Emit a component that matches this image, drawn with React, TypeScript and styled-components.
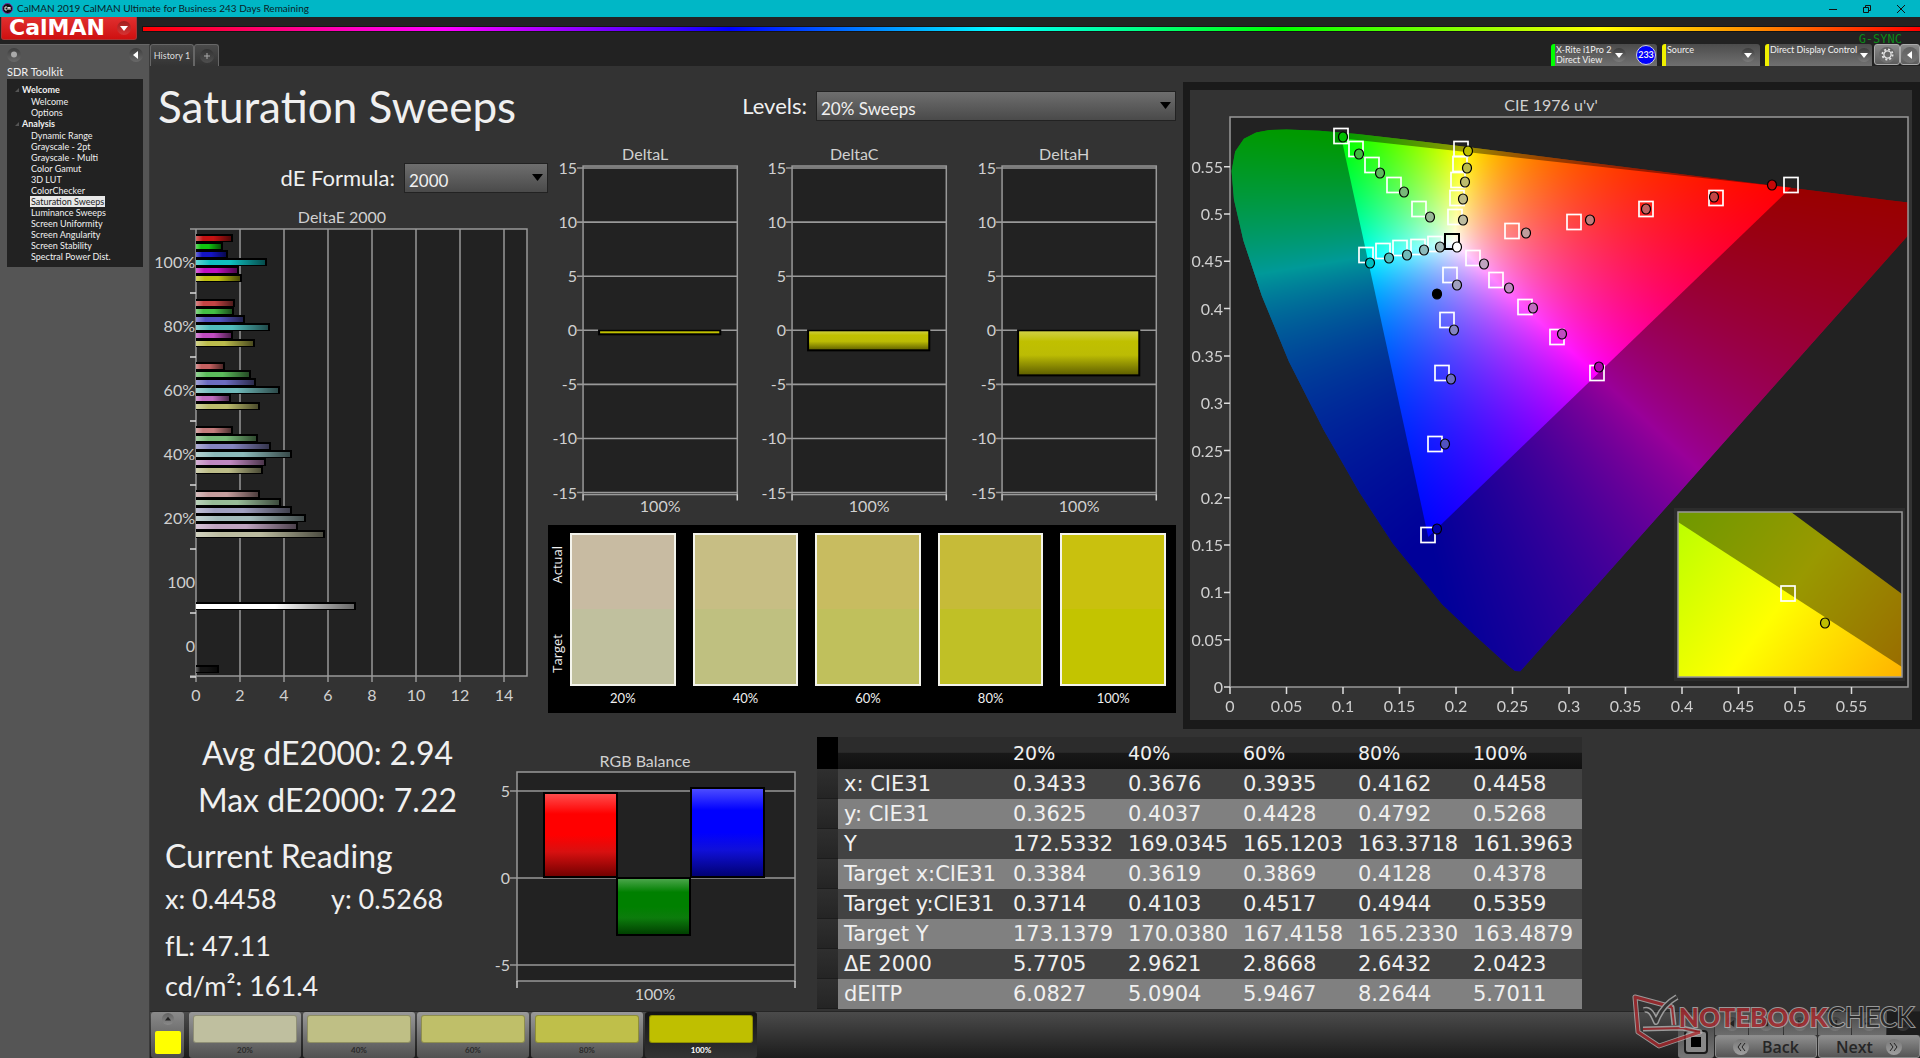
import React, { useEffect, useRef } from "react";
import styled, { createGlobalStyle } from "styled-components";

const UI = `Lato, "Open Sans", "Noto Sans", sans-serif`;

const GlobalStyle = createGlobalStyle`
  *, *::before, *::after { box-sizing: border-box; }
  body { margin: 0; background: #333; color: #f0f0f0; font-family: ${UI}; }
  h1, h2, p, ul, dl, dd { margin: 0; padding: 0; font-weight: 400; }
  ul { list-style: none; }
  button, select { font: inherit; color: inherit; border: 0; padding: 0; margin: 0; }
`;

/* ---------- window frame ---------- */

const Page = styled.div`
  position: relative;
  display: flex;
  flex-direction: column;
  min-height: 100vh;
  background: #222;
  overflow: hidden;
`;

const TitleBar = styled.header`
  display: flex;
  align-items: center;
  justify-content: space-between;
  height: 17px;
  padding: 0 13px 0 2px;
  background: #00b7c6;
  color: #0a2226;
  font-size: 10px;
  line-height: 17px;
`;

const AppName = styled.div`
  display: flex;
  align-items: center;
  gap: 4px;
`;

const WindowButtons = styled.div`
  display: flex;
  gap: 22px;
`;

const WindowButton = styled.button`
  display: flex;
  width: 12px;
  height: 12px;
  background: none;
`;

const Banner = styled.div`
  display: flex;
  height: 27px;
  gap: 6px;
`;

const LogoButton = styled.button`
  display: flex;
  align-items: center;
  justify-content: space-between;
  width: 136px;
  height: 23px;
  margin-left: 1px;
  padding: 0 5px 0 7px;
  border-radius: 0 0 3px 3px;
  border: 1px solid #a33;
  border-top: 0;
  background: linear-gradient(#e03030, #cf1010);
  color: #fff;
  font: bold 22px/22px "DejaVu Sans", sans-serif;
`;

const Rainbow = styled.div`
  flex: 1;
  height: 4px;
  margin-top: 10px;
  outline: 1px solid rgba(0, 0, 0, 0.4);
  background: linear-gradient(
    90deg,
    #f00 0%, #ff00c8 12%, #f0f 17%, #4000ff 30%, #00f 33%, #00c8ff 45%,
    #0ff 48%, #0f8 56%, #0f0 64%, #a0ff00 76%, #ff0 82%, #f80 91%, #f00 100%
  );
`;

const Columns = styled.div`
  display: flex;
  flex: 1;
`;

/* ---------- sidebar ---------- */

const Sidebar = styled.aside`
  display: flex;
  flex-direction: column;
  width: 150px;
  padding: 3px 6px 0 7px;
  background: #555;
  border-right: 1px solid #3a3a3a;
  border-top: 1px solid #666;
`;

const SideTools = styled.div`
  display: flex;
  justify-content: space-between;
  height: 17px;
`;

const RoundButton = styled.button<{ $size?: number }>`
  display: flex;
  flex: none;
  align-items: center;
  justify-content: center;
  width: ${(p) => p.$size ?? 14}px;
  height: ${(p) => p.$size ?? 14}px;
  border-radius: 50%;
  background: linear-gradient(rgba(0, 0, 0, 0.28), rgba(255, 255, 255, 0.12));
`;

const SideTitle = styled.h2`
  height: 14px;
  font-size: 11px;
  line-height: 14px;
`;

const Tree = styled.ul`
  height: 188px;
  padding: 5px 0 0 15px;
  background: #222;
  font-size: 9px;
  line-height: 11px;
`;

const TreeGroup = styled.li`
  position: relative;
  font-weight: 700;

  &::before {
    content: "";
    position: absolute;
    left: -7px;
    top: 4px;
    border: 2px solid;
    border-color: transparent #555 #555 transparent;
  }
`;

const TreeLeaves = styled.ul`
  padding: 1px 0 0 8px;
  font-weight: 400;
`;

const TreeLink = styled.a<{ $active?: boolean }>`
  display: block;
  width: max-content;
  padding: 0 1px;
  color: ${(p) => (p.$active ? "#222" : "#f0f0f0")};
  background: ${(p) => (p.$active ? "#e8e8e8" : "none")};
  text-decoration: none;
`;

/* ---------- tabs and devices ---------- */

const Work = styled.div`
  display: flex;
  flex: 1;
  flex-direction: column;
  min-width: 0;
`;

const TabStrip = styled.div`
  display: flex;
  justify-content: space-between;
  height: 22px;
`;

const Tabs = styled.div`
  display: flex;
`;

const Tab = styled.button<{ $width: number }>`
  display: flex;
  align-items: center;
  justify-content: center;
  width: ${(p) => p.$width}px;
  border: 1px solid #666;
  border-bottom: 0;
  border-radius: 3px 3px 0 0;
  background: linear-gradient(#4a4a4a, #333);
  color: #ddd;
  font-size: 9px;
  white-space: nowrap;
`;

const Devices = styled.div`
  display: flex;
  gap: 5px;
`;

const Device = styled.div<{ $width: number; $accent: string }>`
  display: flex;
  width: ${(p) => p.$width}px;
  height: 22px;
  border-left: 4px solid ${(p) => p.$accent};
  border-radius: 3px 3px 0 0;
  background: linear-gradient(#4c4c4c, #707070);
  font-size: 9px;
  line-height: 10px;
`;

const DeviceName = styled.button`
  display: flex;
  flex: 1;
  justify-content: space-between;
  align-items: center;
  padding: 0 5px 0 1px;
  background: none;
  text-align: left;
  white-space: nowrap;
`;

const DeviceLabel = styled.span`
  align-self: flex-start;
  padding-top: 1px;
`;

const Counter = styled.span`
  align-self: center;
  width: 20px;
  height: 20px;
  margin: 0 1px 0 5px;
  border: 1px solid #ccd;
  border-radius: 50%;
  background: #00f;
  font-weight: 700;
  font-size: 9px;
  line-height: 18px;
  text-align: center;
`;

const SquareButtons = styled.div`
  display: flex;
  margin-left: -3px;
`;

const SquareButton = styled.button<{ $width: number }>`
  display: flex;
  align-items: center;
  justify-content: center;
  width: ${(p) => p.$width}px;
  height: 21px;
  border: 1px solid #aaa;
  border-radius: 3px;
  background: linear-gradient(#8a8a8a, #5c5c5c);
`;

const SyncMark = styled.div`
  position: absolute;
  top: 32px;
  right: 18px;
  height: 11px;
  overflow: hidden;
  color: #0a8a18;
  font: 12px/14px "DejaVu Sans Mono", monospace;
`;

/* ---------- content ---------- */

const Content = styled.main`
  flex: 1;
  background: #333;
`;

const UpperRow = styled.section`
  display: grid;
  grid-template-columns: 1033fr 737fr;
`;

const Sweeps = styled.div`
  padding-right: 7px;
`;

const Heading = styled.div`
  display: flex;
  align-items: center;
  justify-content: space-between;
  height: 76px;
  padding: 4px 0 0 8px;
`;

const PageTitle = styled.h1`
  font-size: 44px;
  line-height: 54px;
`;

const Field = styled.div`
  display: flex;
  align-items: center;
  justify-content: flex-end;
  gap: 9px;
`;

const FieldLabel = styled.label`
  font-size: 22px;
  line-height: 30px;
`;

const SelectBox = styled.div<{ $width: number }>`
  position: relative;
  width: ${(p) => p.$width}px;

  svg {
    position: absolute;
    right: 5px;
    top: 11px;
    pointer-events: none;
  }
`;

const Select = styled.select`
  appearance: none;
  width: 100%;
  height: 30px;
  padding: 4px 4px 0;
  border: 1px solid #222;
  background: linear-gradient(#6e6e6e, #4a4a4a);
  font-size: 17px;
`;

const ChartColumns = styled.div`
  display: grid;
  grid-template-columns: 398fr 628fr;
`;

const FormulaColumn = styled.div`
  padding-top: 21px;
`;

const Trio = styled.div`
  display: grid;
  grid-template-columns: repeat(3, 1fr);
`;

const Chart = styled.svg`
  display: block;
  width: 100%;
  height: auto;
  font-family: ${UI};
  font-size: 16px;
  fill: #d0d0d0;
`;

const SwatchPanel = styled.div`
  display: grid;
  grid-template-columns: 18px 1fr;
  gap: 4px;
  height: 188px;
  padding: 8px 10px 0 0;
  background: #000;
`;

const Upright = styled.div`
  display: flex;
  flex-direction: column;
  align-items: center;
  justify-content: space-between;
  height: 153px;
  padding: 13px 0;
`;

const VerticalText = styled.span`
  writing-mode: vertical-rl;
  transform: rotate(180deg);
  font: 13px/16px "Open Sans", "Noto Sans", sans-serif;
`;

const SwatchList = styled.div`
  display: grid;
  grid-template-columns: repeat(5, 1fr);
  gap: 17px;
`;

const Swatch = styled.figure`
  margin: 0;
  text-align: center;
  font-size: 13px;
  line-height: 24px;
`;

const SwatchFill = styled.div<{ $actual: string; $target: string }>`
  height: 153px;
  border: 2px solid #f4f4ec;
  background: linear-gradient(${(p) => p.$actual} 50%, ${(p) => p.$target} 50%);
`;

/* ---------- chromaticity diagram ---------- */

const CiePanel = styled.div`
  margin-top: 16px;
  border: solid #1a1a1a;
  border-width: 8px 8px 9px 7px;
`;

const CieTitle = styled.h2`
  height: 26px;
  padding-top: 3px;
  color: #d0d0d0;
  font-size: 16px;
  line-height: 24px;
  text-align: center;
`;

const Stage = styled.div`
  display: grid;

  > * {
    grid-area: 1 / 1;
    width: 100%;
    height: auto;
  }
`;

/* ---------- lower row ---------- */

const LowerRow = styled.section`
  display: grid;
  grid-template-columns: 340fr 327fr 765fr 338fr;
`;

const Metrics = styled.div`
  padding-left: 15px;
`;

const Summary = styled.p`
  font-size: 32px;
  line-height: 47px;
  text-align: center;
`;

const ReadingTitle = styled.h2`
  margin-top: 9px;
  font-size: 32px;
  line-height: 47px;
`;

const Reading = styled.div<{ $spaced?: boolean }>`
  display: grid;
  grid-template-columns: 166px auto;
  margin-top: ${(p) => (p.$spaced ? 7 : 0)}px;
  font-size: 27px;
  line-height: 40px;
  white-space: nowrap;
`;

const BalanceBox = styled.div`
  padding-top: 16px;
`;

const TableBox = styled.div`
  padding-top: 8px;
`;

const DataTable = styled.table`
  width: 100%;
  border-collapse: collapse;
  table-layout: fixed;
  font: 21px/30px "DejaVu Sans", "Noto Sans", sans-serif;
  text-align: left;
  white-space: nowrap;

  col:nth-child(1) { width: 21px; }
  col:nth-child(2) { width: 169px; }
  th, td { padding: 0 0 0 6px; font-weight: 400; }
`;

const HeadRow = styled.tr`
  height: 32px;
  font-size: 19px;
  background: linear-gradient(#2c2c2c 48%, #181818 50%, #101010);

  td:first-child { background: #000; }
`;

const BodyRow = styled.tr<{ $light: boolean }>`
  height: 30px;
  background: ${(p) => (p.$light ? "#808080" : "#424242")};

  td:first-child {
    background: linear-gradient(#2f2f2f, #242424);
    box-shadow: inset 0 -1px #1c1c1c;
  }
`;

/* ---------- pattern bar ---------- */

const BottomBar = styled.footer`
  display: flex;
  align-items: flex-end;
  justify-content: space-between;
  height: 47px;
  border-top: 1px solid #262626;
  background: linear-gradient(#4b4b4b, #1c1c1c);
`;

const Patterns = styled.div`
  display: flex;
  gap: 2px;
  padding-left: 1px;
`;

const CurrentPattern = styled.button`
  display: flex;
  flex-direction: column;
  align-items: center;
  justify-content: space-between;
  width: 33px;
  height: 46px;
  margin-right: 3px;
  padding: 1px 0 4px;
  border-radius: 3px;
  background: linear-gradient(#8a8a8a, #4c4c4c);
`;

const CurrentChip = styled.span`
  width: 26px;
  height: 23px;
  border-radius: 2px;
  background: #ff0;
`;

const Pattern = styled.button<{ $active?: boolean }>`
  width: 112px;
  height: 46px;
  padding: 3px 4px 0;
  border-radius: 3px;
  background: ${(p) =>
    p.$active ? "linear-gradient(#141414, #333)" : "linear-gradient(#999, #515151)"};
  color: ${(p) => (p.$active ? "#fff" : "#2a2a2a")};
  font-size: 8px;
  font-weight: 700;
  line-height: 15px;
`;

const PatternChip = styled.span<{ $color: string }>`
  display: block;
  height: 28px;
  border: 1px solid rgba(0, 0, 0, 0.25);
  border-radius: 3px;
  background: ${(p) => p.$color};
`;

const Navigation = styled.div`
  display: grid;
  grid-template-columns: 36px 102px 102px;
  grid-template-rows: 23px 23px;
  column-gap: 1px;
`;

const StopButton = styled.button`
  display: flex;
  grid-row: 1 / 3;
  align-items: flex-end;
  justify-content: center;
  padding-bottom: 4px;
  border-radius: 3px;
  background: linear-gradient(#3c3c3c, #777);
`;

const Transport = styled.div`
  display: grid;
  grid-column: 2 / 4;
  grid-template-columns: repeat(6, 1fr);
  gap: 1px;
`;

const TransportButton = styled.button`
  display: flex;
  align-items: center;
  justify-content: center;
  background: linear-gradient(#4a4a4a, #6c6c6c);

  &:last-child { background: #1d1d1d; }
`;

const NavDisc = styled.span`
  display: flex;
  align-items: center;
  justify-content: center;
  width: 16px;
  height: 16px;
  border-radius: 50%;
  background: linear-gradient(#777, #a0a0a0);
`;

const NavButton = styled.button`
  display: flex;
  align-items: center;
  justify-content: center;
  gap: 13px;
  border: 1px solid #8c8c8c;
  border-radius: 3px;
  background: linear-gradient(#8e8e8e, #555);
  color: #262626;
  font: 600 16px/20px "Open Sans", sans-serif;
`;

const Watermark = styled.div`
  position: absolute;
  right: 6px;
  bottom: 8px;
  display: flex;
  align-items: flex-start;
  opacity: 0.75;
  pointer-events: none;
`;

const WatermarkText = styled.span`
  padding-top: 9px;
  margin-left: -25px;
  color: #b2282d;
  font: 900 26px/28px Lato, sans-serif;
  paint-order: stroke fill;
  -webkit-text-stroke: 2px #bbb;

  b { color: #222; font-weight: 400; }
`;

/* ---------- data ---------- */

const ANALYSIS = [
  "Dynamic Range", "Grayscale - 2pt", "Grayscale - Multi", "Color Gamut", "3D LUT", "ColorChecker",
  "Saturation Sweeps", "Luminance Sweeps", "Screen Uniformity", "Screen Angularity", "Screen Stability",
  "Spectral Power Dist.",
];

const LEVELS = ["20%", "40%", "60%", "80%", "100%"];

const SWATCHES = [
  ["#c8bba2", "#c0c09e"], ["#c7be84", "#bfc080"], ["#c8bc60", "#c0c05c"],
  ["#c6bb38", "#c0c026"], ["#c9c10e", "#c3c400"],
];

const PATTERN_COLORS = ["#bfbf9f", "#bfbf85", "#bfbf69", "#bfbf4a", "#bfbf00"];

const ROWS: [string, string[]][] = [
  ["x: CIE31", ["0.3433", "0.3676", "0.3935", "0.4162", "0.4458"]],
  ["y: CIE31", ["0.3625", "0.4037", "0.4428", "0.4792", "0.5268"]],
  ["Y", ["172.5332", "169.0345", "165.1203", "163.3718", "161.3963"]],
  ["Target x:CIE31", ["0.3384", "0.3619", "0.3869", "0.4128", "0.4378"]],
  ["Target y:CIE31", ["0.3714", "0.4103", "0.4517", "0.4944", "0.5359"]],
  ["Target Y", ["173.1379", "170.0380", "167.4158", "165.2330", "163.4879"]],
  ["ΔE 2000", ["5.7705", "2.9621", "2.8668", "2.6432", "2.0423"]],
  ["dEITP", ["6.0827", "5.0904", "5.9467", "8.2644", "5.7011"]],
];

type Bar = { y: number; end: number; color: string };

const SWEEP_GROUPS: [number, number[], string[]][] = [
  [38, [82, 72, 77, 116, 88, 91], ["#c41212", "#0fc40f", "#1414c4", "#0fbfbf", "#c010c0", "#bfbf10"]],
  [103, [84, 83, 94, 119, 82, 104], ["#c44444", "#44c044", "#5252c0", "#50bcbc", "#c04cc0", "#bcbc4c"]],
  [166, [74, 100, 105, 129, 80, 109], ["#c46060", "#5cbc5c", "#6c6cc0", "#70baba", "#c06cc0", "#bcbc6c"]],
  [230, [82, 107, 120, 141, 115, 112], ["#c47c7c", "#78ba78", "#8484c0", "#8cbaba", "#c088c0", "#bcbc88"]],
  [294, [109, 130, 141, 155, 147, 174], ["#c49c9c", "#98bc98", "#a0a0c0", "#a4bcbc", "#c0a4c0", "#bcbca0"]],
];

const SWEEP_BARS: Bar[] = [
  ...SWEEP_GROUPS.flatMap(([top, ends, colors]) =>
    ends.map((end, i) => ({ y: top + i * 8, end, color: colors[i] })),
  ),
  { y: 406, end: 205, color: "#ffffff" },
  { y: 469, end: 68, color: "#141414" },
];

/* ---------- glyphs ---------- */

const Caret = ({ dir = "down", fill = "#fff", size = 8 }: { dir?: "down" | "left" | "up"; fill?: string; size?: number }) => (
  <svg width={size} height={size} viewBox="0 0 8 8" aria-hidden>
    <path d={{ down: "M0 2h8L4 7z", left: "M6 0v8L1 4z", up: "M0 6h8L4 1z" }[dir]} fill={fill} />
  </svg>
);

const SelectCaret = () => (
  <svg width="11" height="8" viewBox="0 0 11 8" aria-hidden>
    <path d="M0 0h11L5.5 7z" fill="#000" />
  </svg>
);

const Gear = () => (
  <svg width="13" height="13" viewBox="0 0 13 13" fill="none" stroke="#e4e4e4" aria-hidden>
    <circle cx="6.5" cy="6.5" r="3.6" strokeWidth="1.3" />
    <circle cx="6.5" cy="6.5" r="5.1" strokeWidth="1.8" strokeDasharray="2 2" />
  </svg>
);

/* ---------- charts ---------- */

function DeltaEChart() {
  return (
    <Chart viewBox="0 0 398 519">
      <defs>
        <linearGradient id="barShade">
          <stop offset="0" stopColor="#fff" stopOpacity="0.35" />
          <stop offset="0.2" stopColor="#fff" stopOpacity="0" />
          <stop offset="0.5" stopColor="#000" stopOpacity="0" />
          <stop offset="1" stopColor="#000" stopOpacity="0.6" />
        </linearGradient>
      </defs>
      <g transform="translate(0 7)">
        <text x="192" y="23" textAnchor="middle">DeltaE 2000</text>
        <rect x="46" y="29" width="331" height="447" fill="#222" />
        {[0, 2, 4, 6, 8, 10, 12, 14].map((v) => (
          <g key={v}>
            <path d={`M${46 + v * 22} 29V482`} stroke="#999" strokeWidth="1.5" />
            <text x={46 + v * 22} y="501" textAnchor="middle">{v}</text>
          </g>
        ))}
        <path d="M40 29H377V476H40" fill="none" stroke="#999" strokeWidth="1.5" />
        {["100%", "80%", "60%", "40%", "20%", "100", "0"].map((t, i) => (
          <g key={i}>
            <path d={`M40 ${93 + i * 64}h6`} stroke="#ddd" strokeWidth="1.5" />
            <text x="45" y={68 + i * 64} textAnchor="end">{t}</text>
          </g>
        ))}
        {SWEEP_BARS.map((b) => (
          <g key={b.y}>
            <rect x="46" y={b.y - 4} width={b.end - 45} height="8" fill="#000" />
            <rect x="46" y={b.y - 2} width={b.end - 47} height="5" fill={b.color} />
            <rect x="46" y={b.y - 2} width={b.end - 47} height="5" fill="url(#barShade)" />
          </g>
        ))}
      </g>
    </Chart>
  );
}

function DeltaChart({ title, depth }: { title: string; depth: number }) {
  return (
    <Chart viewBox="0 0 209 382">
      <defs>
        <linearGradient id="yellowBar" x2="0" y2="1">
          <stop offset="0" stopColor="#d2d24a" />
          <stop offset="0.25" stopColor="#c0c000" />
          <stop offset="0.55" stopColor="#bcbc04" />
          <stop offset="1" stopColor="#5c5c00" />
        </linearGradient>
      </defs>
      <text x="97" y="18" textAnchor="middle">{title}</text>
      <rect x="35" y="24" width="154" height="328" fill="#222" stroke="#999" strokeWidth="1.5" />
      {[15, 10, 5, 0, -5, -10, -15].map((v, i) => (
        <g key={v}>
          <path d={`M29 ${26 + i * 54}H189`} stroke="#999" strokeWidth="1.5" />
          <text x="29" y={32 + i * 54} textAnchor="end">{v}</text>
        </g>
      ))}
      <path d="M35 352v6M189 352v6" stroke="#ccc" strokeWidth="1.5" />
      <rect x="51" y="188" width="121" height={depth} fill={depth > 8 ? "url(#yellowBar)" : "#c0c000"} stroke="#000" strokeWidth="2" />
      <text x="112" y="369" textAnchor="middle">100%</text>
    </Chart>
  );
}

function BalanceChart() {
  const bars = [
    { x: 54, y: 48, h: 84, from: "#ff5050", mid: "#ff0000", low: "#d81010", end: "#700000" },
    { x: 127, y: 133, h: 57, from: "#50a850", mid: "#008000", low: "#0c7c0c", end: "#003c00" },
    { x: 201, y: 43, h: 89, from: "#5050ff", mid: "#0000ff", low: "#1010d8", end: "#000070" },
  ];
  return (
    <Chart viewBox="0 0 327 265">
      <defs>
        {bars.map((b, i) => (
          <linearGradient id={`rgb${i}`} key={i} x2="0" y2="1">
            <stop offset="0" stopColor={b.from} />
            <stop offset="0.25" stopColor={b.mid} />
            <stop offset="0.5" stopColor={b.mid} />
            <stop offset="0.7" stopColor={b.low} />
            <stop offset="1" stopColor={b.end} />
          </linearGradient>
        ))}
      </defs>
      <text x="155" y="22" textAnchor="middle">RGB Balance</text>
      <rect x="27" y="27" width="278" height="209" fill="#222" stroke="#999" strokeWidth="1.5" />
      {[5, 0, -5].map((v, i) => (
        <g key={v}>
          <path d={`M20 ${46 + i * 87}H305`} stroke="#999" strokeWidth="1.5" />
          <text x="20" y={52 + i * 87} textAnchor="end">{v}</text>
        </g>
      ))}
      <path d="M27 236v7M305 236v7" stroke="#ccc" strokeWidth="1.5" />
      {bars.map((b, i) => (
        <rect key={i} x={b.x} y={b.y} width="73" height={b.h} fill={`url(#rgb${i})`} stroke="#000" strokeWidth="2" />
      ))}
      <text x="165" y="255" textAnchor="middle">100%</text>
    </Chart>
  );
}

/* Spectral locus in u'v', 380 nm to 700 nm. */
const LOCUS = [
  [0.2569, 0.0165], [0.2522, 0.0169], [0.2461, 0.0226], [0.2347, 0.035], [0.2161, 0.0549], [0.1877, 0.0871],
  [0.1441, 0.151], [0.1147, 0.2044], [0.0828, 0.2708], [0.0521, 0.3427], [0.0282, 0.4117], [0.0119, 0.4698],
  [0.0035, 0.5131], [0.0014, 0.5432], [0.0046, 0.5638], [0.0123, 0.577], [0.0231, 0.5837], [0.035, 0.5862],
  [0.0501, 0.5868], [0.0792, 0.5856], [0.1127, 0.5821], [0.1531, 0.5766], [0.2026, 0.5694], [0.2623, 0.5604],
  [0.3315, 0.5501], [0.4035, 0.5393], [0.4692, 0.5296], [0.5203, 0.5219], [0.583, 0.5125], [0.6234, 0.5065],
];
const P3 = [[0.0986, 0.5777], [0.4964, 0.5255], [0.1754, 0.1579]];

const PLOT = { x: 40, y: 1, w: 678, h: 570 };
const toX = (u: number) => PLOT.x + u * 1130;
const toY = (v: number) => PLOT.y + PLOT.h - v * 950;

/* Brightest displayable linear P3 colour with the chromaticity u'v'. */
function chromaColor(u: number, v: number): number[] {
  const d = 6 * u - 16 * v + 12;
  const x = (9 * u) / d;
  const y = Math.max((4 * v) / d, 0.0001);
  const X = x / y;
  const Z = (1 - x - y) / y;
  const lin = [
    2.4935 * X - 0.9314 - 0.4027 * Z,
    -0.8295 * X + 1.7627 + 0.0236 * Z,
    0.0358 * X - 0.0762 + 0.9569 * Z,
  ].map((c) => Math.max(c, 0));
  const top = Math.max(...lin);
  return lin.map((c) => (255 * c) / top);
}

function GamutCanvas() {
  const ref = useRef<HTMLCanvasElement>(null);
  useEffect(() => {
    const ctx = ref.current!.getContext("2d")!;
    const src = document.createElement("canvas");
    src.width = 722;
    src.height = 604;
    const sctx = src.getContext("2d")!;
    const img = sctx.createImageData(722, 604);
    for (let py = 0; py < 604; py++) {
      for (let px = 0; px < 722; px++) {
        const rgb = chromaColor((px - PLOT.x) / 1130, (PLOT.y + PLOT.h - py) / 950);
        const o = (py * 722 + px) * 4;
        img.data[o] = rgb[0];
        img.data[o + 1] = rgb[1];
        img.data[o + 2] = rgb[2];
        img.data[o + 3] = 255;
      }
    }
    sctx.putImageData(img, 0, 0);
    const trace = (points: number[][]) => {
      ctx.beginPath();
      points.forEach(([u, v]) => ctx.lineTo(toX(u), toY(v)));
      ctx.closePath();
    };
    ctx.fillStyle = "#222";
    ctx.fillRect(PLOT.x, PLOT.y, PLOT.w, PLOT.h);
    ctx.beginPath();
    ctx.rect(PLOT.x, PLOT.y, PLOT.w, PLOT.h);
    ctx.clip();
    ctx.save();
    trace(LOCUS);
    ctx.clip();
    ctx.drawImage(src, 0, 0);
    ctx.fillStyle = "rgba(0,0,0,0.4)";
    ctx.fillRect(0, 0, 722, 604);
    ctx.restore();
    ctx.save();
    trace(P3);
    ctx.clip();
    ctx.drawImage(src, 0, 0);
    ctx.restore();
  }, []);
  return <canvas ref={ref} width={722} height={604} />;
}

const TARGETS = [
  [151, 20], [166, 33], [182, 49], [204, 69], [229, 93],
  [271, 33], [270, 48], [268, 64], [267, 82], [265, 101],
  [176, 139], [193, 135], [210, 132], [228, 131], [245, 128],
  [283, 142], [306, 164], [335, 191], [367, 221], [407, 257],
  [260, 159], [257, 204], [252, 257], [245, 328], [238, 419],
  [322, 115], [384, 106], [456, 93], [526, 82], [601, 69],
];

const READINGS: [number, number, string][] = [
  [153, 21, "#00c000"], [169, 38, "#40b840"], [190, 57, "#5cb85c"], [214, 76, "#78b878"], [240, 101, "#98b898"],
  [278, 35, "#bfbf00"], [277, 52, "#bcbc48"], [275, 66, "#bcbc6c"], [273, 83, "#bcbc88"], [273, 104, "#bcbca0"],
  [180, 147, "#00bfbf"], [199, 142, "#50bcbc"], [217, 139, "#70baba"], [234, 134, "#8cbaba"], [250, 131, "#a4bcbc"],
  [267, 131, "#ffffff"], [247, 178, "#000000"],
  [294, 148, "#c0a4c0"], [319, 172, "#c088c0"], [343, 192, "#c06cc0"], [372, 218, "#c04cc0"], [409, 251, "#b000b0"],
  [267, 169, "#a0a0c0"], [264, 214, "#8484c0"], [261, 263, "#6c6cc0"], [255, 328, "#5252c0"], [247, 413, "#0000a8"],
  [336, 117, "#c09c9c"], [400, 104, "#c07c7c"], [456, 93, "#c06060"], [524, 81, "#c44444"], [582, 69, "#c40808"],
];

function CieChart() {
  const steps = Array.from({ length: 12 }, (_, i) => i);
  const name = (i: number) => String(Number((i * 0.05).toFixed(2)));
  return (
    <Chart viewBox="0 0 722 604">
      <defs>
        <linearGradient id="insetHue" gradientUnits="userSpaceOnUse" x1="0" y1="0" x2="220" y2="165">
          <stop offset="0" stopColor="#b8ff00" />
          <stop offset="0.5" stopColor="#ffff00" />
          <stop offset="1" stopColor="#ffb400" />
        </linearGradient>
      </defs>
      <rect x="40" y="1" width="678" height="570" fill="none" stroke="#999" strokeWidth="1.5" />
      {steps.map((i) => (
        <g key={i}>
          <path d={`M34 ${571 - i * 47.3}h6M${40 + i * 56.5} 571v7`} stroke="#ddd" strokeWidth="1.5" />
          <text x="33" y={577 - i * 47.3} textAnchor="end">{name(i)}</text>
          <text x={40 + i * 56.5} y="596" textAnchor="middle">{name(i)}</text>
        </g>
      ))}
      {TARGETS.map(([x, y]) => (
        <rect key={`${x}-${y}`} x={x - 7} y={y - 7.5} width="14" height="15" fill="none" stroke="#fff" strokeWidth="1.7" />
      ))}
      <rect x="255" y="118" width="14" height="15" fill="none" stroke="#000" strokeWidth="2" />
      {READINGS.map(([x, y, fill]) => (
        <ellipse key={`${x}-${y}`} cx={x} cy={y} rx="4.5" ry="5" fill={fill} stroke="#000" strokeWidth="1.2" />
      ))}
      <rect x="484" y="392" width="231" height="173" fill="#2c2c2c" />
      <g transform="translate(488 396)">
        <rect width="224" height="165" fill="url(#insetHue)" />
        <path d="M0 10V0H224V155z" fill="#000" fillOpacity="0.4" />
        <path d="M113 0H224V82z" fill="#222" />
        <rect width="224" height="165" fill="none" stroke="#999" strokeWidth="1.5" />
        <rect x="103" y="74" width="14" height="15" fill="none" stroke="#fff" strokeWidth="1.7" />
        <ellipse cx="147" cy="111" rx="4.5" ry="5" fill="#bfbf00" stroke="#000" strokeWidth="1.2" />
      </g>
    </Chart>
  );
}

/* ---------- page ---------- */

const TRANSPORT = [
  { label: "Rewind", d: "M8 1v8L2 5z" },
  { label: "Stop", d: "M1 1h7v7H1z" },
  { label: "Play", d: "M2 1v8l6-4z" },
  { label: "Step", d: "M1 1v8h2V1zM6 1v8h2V1z" },
  { label: "Loop", d: "M1 4h7v2H1z" },
  { label: "Refresh", d: "M1 1h7v2H3v4h5v2H1z" },
];

export default function App() {
  return (
    <Page>
      <GlobalStyle />
      <TitleBar>
        <AppName>
          <svg width="11" height="11" viewBox="0 0 11 11" aria-hidden>
            <circle cx="5.5" cy="5.5" r="5" fill="#111" stroke="#7a2fa0" />
            <path d="M5 4H3v3h2M6 7V4l1 1.500L8 4v3" stroke="#fff" fill="none" strokeWidth="0.9" />
          </svg>
          CalMAN 2019 CalMAN Ultimate for Business 243 Days Remaining
        </AppName>
        <WindowButtons>
          <WindowButton aria-label="Minimize">
            <svg width="12" height="12" viewBox="0 0 12 12"><path d="M2 6.500h8" stroke="#111" /></svg>
          </WindowButton>
          <WindowButton aria-label="Restore">
            <svg width="12" height="12" viewBox="0 0 12 12" fill="none" stroke="#111">
              <path d="M2.500 4.500h5v5h-5zM4.500 4.500v-2h5v5h-2" />
            </svg>
          </WindowButton>
          <WindowButton aria-label="Close">
            <svg width="12" height="12" viewBox="0 0 12 12"><path d="M2 2l8 8M10 2l-8 8" stroke="#111" /></svg>
          </WindowButton>
        </WindowButtons>
      </TitleBar>

      <Banner>
        <LogoButton>
          CalMAN
          <RoundButton as="span"><Caret /></RoundButton>
        </LogoButton>
        <Rainbow />
      </Banner>
      <SyncMark>G-SYNC</SyncMark>

      <Columns>
        <Sidebar>
          <SideTools>
            <RoundButton aria-label="Record">
              <svg width="8" height="8" viewBox="0 0 8 8"><circle cx="4" cy="3.500" r="3" fill="#aaa" /></svg>
            </RoundButton>
            <RoundButton aria-label="Collapse"><Caret dir="left" /></RoundButton>
          </SideTools>
          <SideTitle>SDR Toolkit</SideTitle>
          <Tree>
            <TreeGroup>
              Welcome
              <TreeLeaves>
                {["Welcome", "Options"].map((t) => (
                  <li key={t}><TreeLink href="#">{t}</TreeLink></li>
                ))}
              </TreeLeaves>
            </TreeGroup>
            <TreeGroup>
              Analysis
              <TreeLeaves>
                {ANALYSIS.map((t) => (
                  <li key={t}><TreeLink href="#" $active={t === "Saturation Sweeps"}>{t}</TreeLink></li>
                ))}
              </TreeLeaves>
            </TreeGroup>
          </Tree>
        </Sidebar>

        <Work>
          <TabStrip>
            <Tabs>
              <Tab $width={44}>History 1</Tab>
              <Tab $width={25} aria-label="Add history">
                <RoundButton as="span">
                  <svg width="6" height="6" viewBox="0 0 6 6"><path d="M3 0v6M0 3h6" stroke="#aaa" /></svg>
                </RoundButton>
              </Tab>
            </Tabs>
            <Devices>
              <Device $width={106} $accent="#0f0">
                <DeviceName>
                  <DeviceLabel>X-Rite i1Pro 2<br />Direct View</DeviceLabel>
                  <RoundButton as="span"><Caret /></RoundButton>
                </DeviceName>
                <Counter>233</Counter>
              </Device>
              <Device $width={98} $accent="#f0f000">
                <DeviceName>
                  <DeviceLabel>Source</DeviceLabel>
                  <RoundButton as="span"><Caret /></RoundButton>
                </DeviceName>
              </Device>
              <Device $width={107} $accent="#f0f000">
                <DeviceName>
                  <DeviceLabel>Direct Display Control</DeviceLabel>
                  <RoundButton as="span"><Caret /></RoundButton>
                </DeviceName>
              </Device>
              <SquareButtons>
                <SquareButton $width={26} aria-label="Settings">
                  <RoundButton as="span" $size={16}><Gear /></RoundButton>
                </SquareButton>
                <SquareButton $width={20} aria-label="Show panel">
                  <RoundButton as="span" $size={16}><Caret dir="left" /></RoundButton>
                </SquareButton>
              </SquareButtons>
            </Devices>
          </TabStrip>

          <Content>
            <UpperRow>
              <Sweeps>
                <Heading>
                  <PageTitle>Saturation Sweeps</PageTitle>
                  <Field>
                    <FieldLabel htmlFor="levels">Levels:</FieldLabel>
                    <SelectBox $width={360}>
                      <Select id="levels"><option>20% Sweeps</option></Select>
                      <SelectCaret />
                    </SelectBox>
                  </Field>
                </Heading>
                <ChartColumns>
                  <FormulaColumn>
                    <Field>
                      <FieldLabel htmlFor="formula">dE Formula:</FieldLabel>
                      <SelectBox $width={144}>
                        <Select id="formula"><option>2000</option></Select>
                        <SelectCaret />
                      </SelectBox>
                    </Field>
                    <DeltaEChart />
                  </FormulaColumn>
                  <div>
                    <Trio>
                      <DeltaChart title="DeltaL" depth={4} />
                      <DeltaChart title="DeltaC" depth={20} />
                      <DeltaChart title="DeltaH" depth={45} />
                    </Trio>
                    <SwatchPanel>
                      <Upright>
                        <VerticalText>Actual</VerticalText>
                        <VerticalText>Target</VerticalText>
                      </Upright>
                      <SwatchList>
                        {SWATCHES.map(([actual, target], i) => (
                          <Swatch key={actual}>
                            <SwatchFill $actual={actual} $target={target} />
                            <figcaption>{LEVELS[i]}</figcaption>
                          </Swatch>
                        ))}
                      </SwatchList>
                    </SwatchPanel>
                  </div>
                </ChartColumns>
              </Sweeps>
              <CiePanel>
                <CieTitle>CIE 1976 u'v'</CieTitle>
                <Stage>
                  <GamutCanvas />
                  <CieChart />
                </Stage>
              </CiePanel>
            </UpperRow>

            <LowerRow>
              <Metrics>
                <Summary>Avg dE2000: 2.94</Summary>
                <Summary>Max dE2000: 7.22</Summary>
                <ReadingTitle>Current Reading</ReadingTitle>
                <Reading><span>x: 0.4458</span><span>y: 0.5268</span></Reading>
                <Reading $spaced>fL: 47.11</Reading>
                <Reading>cd/m²: 161.4</Reading>
              </Metrics>
              <BalanceBox><BalanceChart /></BalanceBox>
              <TableBox>
                <DataTable>
                  <colgroup>
                    <col /><col /><col /><col /><col /><col /><col />
                  </colgroup>
                  <thead>
                    <HeadRow>
                      <td />
                      <td />
                      {LEVELS.map((l) => <th key={l} scope="col">{l}</th>)}
                    </HeadRow>
                  </thead>
                  <tbody>
                    {ROWS.map(([name, values], i) => (
                      <BodyRow key={name} $light={i % 2 === 1}>
                        <td />
                        <th scope="row">{name}</th>
                        {values.map((v) => <td key={v}>{v}</td>)}
                      </BodyRow>
                    ))}
                  </tbody>
                </DataTable>
              </TableBox>
            </LowerRow>
          </Content>

          <BottomBar>
            <Patterns>
              <CurrentPattern aria-label="Current pattern">
                <RoundButton as="span" $size={12}><Caret dir="up" fill="#222" size={6} /></RoundButton>
                <CurrentChip />
              </CurrentPattern>
              {LEVELS.map((l, i) => (
                <Pattern key={l} $active={l === "100%"}>
                  <PatternChip $color={PATTERN_COLORS[i]} />
                  {l}
                </Pattern>
              ))}
            </Patterns>
            <Navigation>
              <StopButton aria-label="Target">
                <svg width="24" height="24" viewBox="0 0 24 24">
                  <rect x="1" y="1" width="22" height="22" rx="3" fill="#888" stroke="#1a1a1a" strokeWidth="2" />
                  <rect x="7" y="7" width="10" height="10" fill="#000" />
                </svg>
              </StopButton>
              <Transport>
                {TRANSPORT.map((t) => (
                  <TransportButton key={t.label} aria-label={t.label}>
                    <RoundButton as="span">
                      <svg width="9" height="9" viewBox="0 0 10 10"><path d={t.d} fill="#222" /></svg>
                    </RoundButton>
                  </TransportButton>
                ))}
              </Transport>
              <NavButton>
                <NavDisc>
                  <svg width="9" height="8" viewBox="0 0 9 8" fill="none" stroke="#222"><path d="M4 0L1 4l3 4M8 0L5 4l3 4" /></svg>
                </NavDisc>
                Back
              </NavButton>
              <NavButton>
                Next
                <NavDisc>
                  <svg width="9" height="8" viewBox="0 0 9 8" fill="none" stroke="#222"><path d="M1 0l3 4-3 4M5 0l3 4-3 4" /></svg>
                </NavDisc>
              </NavButton>
            </Navigation>
          </BottomBar>
        </Work>
      </Columns>

      <Watermark>
        <svg width="72" height="56" viewBox="0 0 72 56" fill="none" strokeLinejoin="round" aria-hidden>
          <path d="M42 31L40 13 3 3l3 35 21 14 41-14-18-4-39 1" stroke="#bbb" strokeWidth="5" />
          <path d="M40 13L3 3l3 35 21 14 41-14" stroke="#b2282d" strokeWidth="3" />
          <path d="M42 31L40 13M68 38l-18-4-39 1" stroke="#b2282d" strokeWidth="2" />
          <path d="M12 16c6-2 9 5 12 12C28 17 36 8 45 3" stroke="#bbb" strokeWidth="6" />
          <path d="M12 16c6-2 9 5 12 12C28 17 36 8 45 3" stroke="#333" strokeWidth="3" />
        </svg>
        <WatermarkText>NOTEBOOK<b>CHECK</b></WatermarkText>
      </Watermark>
    </Page>
  );
}
